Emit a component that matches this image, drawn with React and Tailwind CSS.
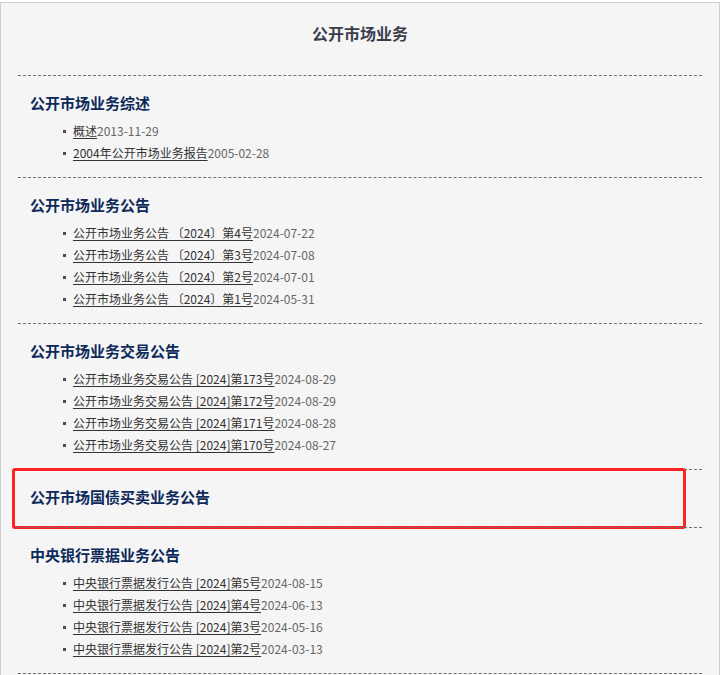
import React from "react";

const sections = [
  {
    title: "公开市场业务综述",
    items: [
      { text: "概述", date: "2013-11-29" },
      { text: "2004年公开市场业务报告", date: "2005-02-28" },
    ],
  },
  {
    title: "公开市场业务公告",
    items: [
      { text: "公开市场业务公告 〔2024〕第4号", date: "2024-07-22" },
      { text: "公开市场业务公告 〔2024〕第3号", date: "2024-07-08" },
      { text: "公开市场业务公告 〔2024〕第2号", date: "2024-07-01" },
      { text: "公开市场业务公告 〔2024〕第1号", date: "2024-05-31" },
    ],
  },
  {
    title: "公开市场业务交易公告",
    items: [
      { text: "公开市场业务交易公告 [2024]第173号", date: "2024-08-29" },
      { text: "公开市场业务交易公告 [2024]第172号", date: "2024-08-29" },
      { text: "公开市场业务交易公告 [2024]第171号", date: "2024-08-28" },
      { text: "公开市场业务交易公告 [2024]第170号", date: "2024-08-27" },
    ],
  },
  {
    title: "公开市场国债买卖业务公告",
    items: [],
    marked: true,
  },
  {
    title: "中央银行票据业务公告",
    items: [
      { text: "中央银行票据发行公告 [2024]第5号", date: "2024-08-15" },
      { text: "中央银行票据发行公告 [2024]第4号", date: "2024-06-13" },
      { text: "中央银行票据发行公告 [2024]第3号", date: "2024-05-16" },
      { text: "中央银行票据发行公告 [2024]第2号", date: "2024-03-13" },
    ],
  },
];

const Section = ({ section }) => (
  <div className="relative border-t border-dashed border-[#707070] pt-[15px] pb-[13px]">
    <h3 className="pl-[12px] text-[15px] leading-[24px] font-bold text-[#0d2a5a]">
      {section.title}
    </h3>
    <ul className="mt-[5px]">
      {section.items.map((item, i) => (
        <li key={i} className="flex items-center h-[22px] pl-[45px] text-[12px] leading-[22px]">
          <span className="w-[3px] h-[3px] bg-[#4a4a4a] mr-[7px] shrink-0" />
          <a className="text-[#333] underline underline-offset-[2px] cursor-pointer whitespace-pre">
            {item.text}
          </a>
          <span className="text-[#666]">{item.date}</span>
        </li>
      ))}
    </ul>

    {/* highlight box drawn over this row */}
    {section.marked && (
      <div className="absolute -top-[2px] -bottom-[2px] -left-[6px] right-[16px] border-[3px] border-[#ff2424] rounded-[3px] pointer-events-none" />
    )}
  </div>
);

export default function App() {
  return (
    <div
      className="pt-[2px] bg-white min-h-screen"
      style={{ fontFamily: '"Noto Sans CJK SC", "Noto Sans", sans-serif' }}
    >
      <div className="w-[720px] border border-[#cfcfcf] bg-[#f5f5f5]">
        <h2 className="pt-[18px] pb-[30px] text-center text-[16px] leading-[24px] font-bold text-[#3b3d4c]">
          公开市场业务
        </h2>
        <div className="mx-[17px]">
          {sections.map((s, i) => (
            <Section key={i} section={s} />
          ))}
          <div className="border-t border-dashed border-[#707070] h-[40px]" />
        </div>
      </div>
    </div>
  );
}
